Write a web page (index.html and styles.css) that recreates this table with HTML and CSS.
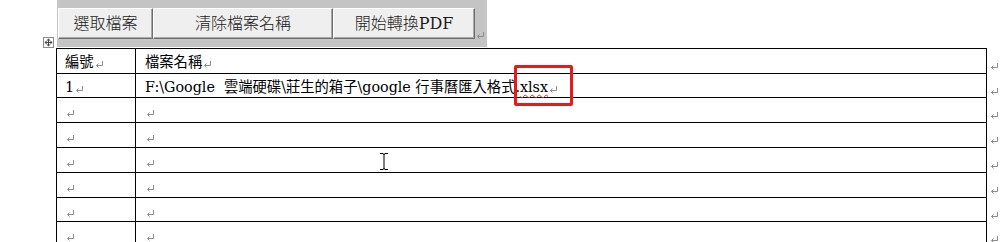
FILE: index.html
```html
<!DOCTYPE html>
<html lang="zh-Hant">
<head>
<meta charset="utf-8">
<title>Word 表單</title>
<link rel="stylesheet" href="styles.css">
</head>
<body>
<div class="page">
  <div class="toolbar">
    <button class="btn btn-pick">選取檔案</button>
    <button class="btn btn-clear">清除檔案名稱</button>
    <button class="btn btn-convert">開始轉換PDF</button>
    <svg class="pm pm-bar" width="8" height="7" viewBox="0 0 8 7"><path d="M7.5 0v4.5H1.5M3.5 2.5l-2 2 2 2" fill="none" stroke="#8c8c8c"/></svg>
  </div>

  <div class="tablearea">
    <svg class="move" width="11" height="11" viewBox="0 0 11 11"><rect x=".5" y=".5" width="10" height="10" fill="#fff" stroke="#8a8a8a"/><path d="M5.5 2.5v6M2.5 5.5h6" stroke="#444"/><path d="M5.5 1.5l-2 2h4zM5.5 9.5l-2-2h4zM1.5 5.5l2-2v4zM9.5 5.5l-2-2v4z" fill="#444"/></svg>
    <table class="grid">
      <colgroup><col class="c-no"><col class="c-name"><col class="c-end"></colgroup>
      <tr class="r25">
        <td>編號<svg class="pm" width="8" height="7" viewBox="0 0 8 7"><path d="M7.5 0v4.5H1.5M3.5 2.5l-2 2 2 2" fill="none" stroke="#8c8c8c"/></svg></td>
        <td>檔案名稱<svg class="pm" width="8" height="7" viewBox="0 0 8 7"><path d="M7.5 0v4.5H1.5M3.5 2.5l-2 2 2 2" fill="none" stroke="#8c8c8c"/></svg></td>
        <td class="end"><svg class="pm" width="8" height="7" viewBox="0 0 8 7"><path d="M7.5 0v4.5H1.5M3.5 2.5l-2 2 2 2" fill="none" stroke="#8c8c8c"/></svg></td>
      </tr>
      <tr class="r24">
        <td>1<svg class="pm" width="8" height="7" viewBox="0 0 8 7"><path d="M7.5 0v4.5H1.5M3.5 2.5l-2 2 2 2" fill="none" stroke="#8c8c8c"/></svg></td>
        <td>F:\Google&nbsp; 雲端硬碟\莊生的箱子\google 行事曆匯入格式.<span class="spell">xlsx</span><svg class="pm" width="8" height="7" viewBox="0 0 8 7"><path d="M7.5 0v4.5H1.5M3.5 2.5l-2 2 2 2" fill="none" stroke="#8c8c8c"/></svg></td>
        <td class="end"><svg class="pm" width="8" height="7" viewBox="0 0 8 7"><path d="M7.5 0v4.5H1.5M3.5 2.5l-2 2 2 2" fill="none" stroke="#8c8c8c"/></svg></td>
      </tr>
      <tr class="r25">
        <td><svg class="pm" width="8" height="7" viewBox="0 0 8 7"><path d="M7.5 0v4.5H1.5M3.5 2.5l-2 2 2 2" fill="none" stroke="#8c8c8c"/></svg></td>
        <td><svg class="pm" width="8" height="7" viewBox="0 0 8 7"><path d="M7.5 0v4.5H1.5M3.5 2.5l-2 2 2 2" fill="none" stroke="#8c8c8c"/></svg></td>
        <td class="end"><svg class="pm" width="8" height="7" viewBox="0 0 8 7"><path d="M7.5 0v4.5H1.5M3.5 2.5l-2 2 2 2" fill="none" stroke="#8c8c8c"/></svg></td>
      </tr>
      <tr class="r25">
        <td><svg class="pm" width="8" height="7" viewBox="0 0 8 7"><path d="M7.5 0v4.5H1.5M3.5 2.5l-2 2 2 2" fill="none" stroke="#8c8c8c"/></svg></td>
        <td><svg class="pm" width="8" height="7" viewBox="0 0 8 7"><path d="M7.5 0v4.5H1.5M3.5 2.5l-2 2 2 2" fill="none" stroke="#8c8c8c"/></svg></td>
        <td class="end"><svg class="pm" width="8" height="7" viewBox="0 0 8 7"><path d="M7.5 0v4.5H1.5M3.5 2.5l-2 2 2 2" fill="none" stroke="#8c8c8c"/></svg></td>
      </tr>
      <tr class="r25">
        <td><svg class="pm" width="8" height="7" viewBox="0 0 8 7"><path d="M7.5 0v4.5H1.5M3.5 2.5l-2 2 2 2" fill="none" stroke="#8c8c8c"/></svg></td>
        <td><svg class="pm" width="8" height="7" viewBox="0 0 8 7"><path d="M7.5 0v4.5H1.5M3.5 2.5l-2 2 2 2" fill="none" stroke="#8c8c8c"/></svg></td>
        <td class="end"><svg class="pm" width="8" height="7" viewBox="0 0 8 7"><path d="M7.5 0v4.5H1.5M3.5 2.5l-2 2 2 2" fill="none" stroke="#8c8c8c"/></svg></td>
      </tr>
      <tr class="r25">
        <td><svg class="pm" width="8" height="7" viewBox="0 0 8 7"><path d="M7.5 0v4.5H1.5M3.5 2.5l-2 2 2 2" fill="none" stroke="#8c8c8c"/></svg></td>
        <td><svg class="pm" width="8" height="7" viewBox="0 0 8 7"><path d="M7.5 0v4.5H1.5M3.5 2.5l-2 2 2 2" fill="none" stroke="#8c8c8c"/></svg></td>
        <td class="end"><svg class="pm" width="8" height="7" viewBox="0 0 8 7"><path d="M7.5 0v4.5H1.5M3.5 2.5l-2 2 2 2" fill="none" stroke="#8c8c8c"/></svg></td>
      </tr>
      <tr class="r24">
        <td><svg class="pm" width="8" height="7" viewBox="0 0 8 7"><path d="M7.5 0v4.5H1.5M3.5 2.5l-2 2 2 2" fill="none" stroke="#8c8c8c"/></svg></td>
        <td><svg class="pm" width="8" height="7" viewBox="0 0 8 7"><path d="M7.5 0v4.5H1.5M3.5 2.5l-2 2 2 2" fill="none" stroke="#8c8c8c"/></svg></td>
        <td class="end"><svg class="pm" width="8" height="7" viewBox="0 0 8 7"><path d="M7.5 0v4.5H1.5M3.5 2.5l-2 2 2 2" fill="none" stroke="#8c8c8c"/></svg></td>
      </tr>
      <tr class="r25">
        <td><svg class="pm" width="8" height="7" viewBox="0 0 8 7"><path d="M7.5 0v4.5H1.5M3.5 2.5l-2 2 2 2" fill="none" stroke="#8c8c8c"/></svg></td>
        <td><svg class="pm" width="8" height="7" viewBox="0 0 8 7"><path d="M7.5 0v4.5H1.5M3.5 2.5l-2 2 2 2" fill="none" stroke="#8c8c8c"/></svg></td>
        <td class="end"><svg class="pm" width="8" height="7" viewBox="0 0 8 7"><path d="M7.5 0v4.5H1.5M3.5 2.5l-2 2 2 2" fill="none" stroke="#8c8c8c"/></svg></td>
      </tr>
    </table>
  </div>

  <div class="redbox"></div>
  <svg class="ibeam" width="8" height="17" viewBox="0 0 8 17"><path d="M0 .5h3M5 .5h3M4 1v15M0 16.5h3M5 16.5h3" fill="none" stroke="#000"/><path d="M3 1h2M3 16h2" stroke="#000"/></svg>
</div>
</body>
</html>
```

FILE: styles.css
```css
html, body {
  margin: 0;
  padding: 0;
  background: #fff;
  overflow: hidden;
}

.page {
  position: relative;
  width: 1005px;
  height: 242px;
  font-family: "Liberation Serif", "Noto Sans CJK TC", serif;
  color: #000;
}

.toolbar {
  margin-left: 57px;
  width: 430px;
  height: 47px;
  box-sizing: border-box;
  padding: 8px 0 0 1px;
  background: #c4c4c4;
  display: flex;
  align-items: flex-start;
}

.btn {
  height: 31px;
  margin: 0;
  padding: 0;
  box-sizing: border-box;
  background: #efefef;
  border-style: solid;
  border-width: 1px;
  border-color: #ffffff #6e6e6e #6e6e6e #ffffff;
  box-shadow: inset -1px -1px 0 #a8a8a8;
  font-family: "DejaVu Serif", "Noto Sans CJK TC", serif;
  font-size: 16px;
  font-weight: 300;
  color: #1a1a1a;
  line-height: 30px;
  text-align: center;
  border-radius: 0;
}

.btn-pick { width: 95px; }
.btn-clear { width: 180px; }
.btn-convert { width: 142px; }

.pm-bar {
  margin: 24px 0 0 1px;
}

.tablearea {
  position: relative;
  margin-top: 1px;
}

.move {
  position: absolute;
  left: 43px;
  top: -11px;
  display: block;
}

.grid {
  margin-left: 56px;
  border-collapse: collapse;
  table-layout: fixed;
  width: 949px;
  font-family: "DejaVu Serif", "Noto Sans CJK TC", serif;
  font-size: 14.3px;
}

.c-no { width: 79px; }
.c-name { width: 851px; }
.c-end { width: 19px; }

.grid td {
  border: 1px solid #000;
  padding: 2px 0 0 8px;
  vertical-align: middle;
  white-space: nowrap;
  line-height: 16px;
}

.grid td + td {
  padding-left: 9px;
}

.grid td.end {
  border: none;
  padding: 6px 0 0 2px;
}

.r25 { height: 25px; }
.r24 { height: 24px; }

.pm {
  display: inline-block;
  vertical-align: -1px;
  margin-left: 1px;
}

.spell {
  text-decoration: underline wavy #e02020;
  text-decoration-thickness: 1px;
  text-underline-offset: 2px;
}

.redbox {
  position: absolute;
  left: 514px;
  top: 65px;
  width: 59px;
  height: 41px;
  box-sizing: border-box;
  border: 3px solid #e41b1b;
  border-radius: 2px;
}

.ibeam {
  position: absolute;
  left: 380px;
  top: 153px;
  display: block;
}
```
